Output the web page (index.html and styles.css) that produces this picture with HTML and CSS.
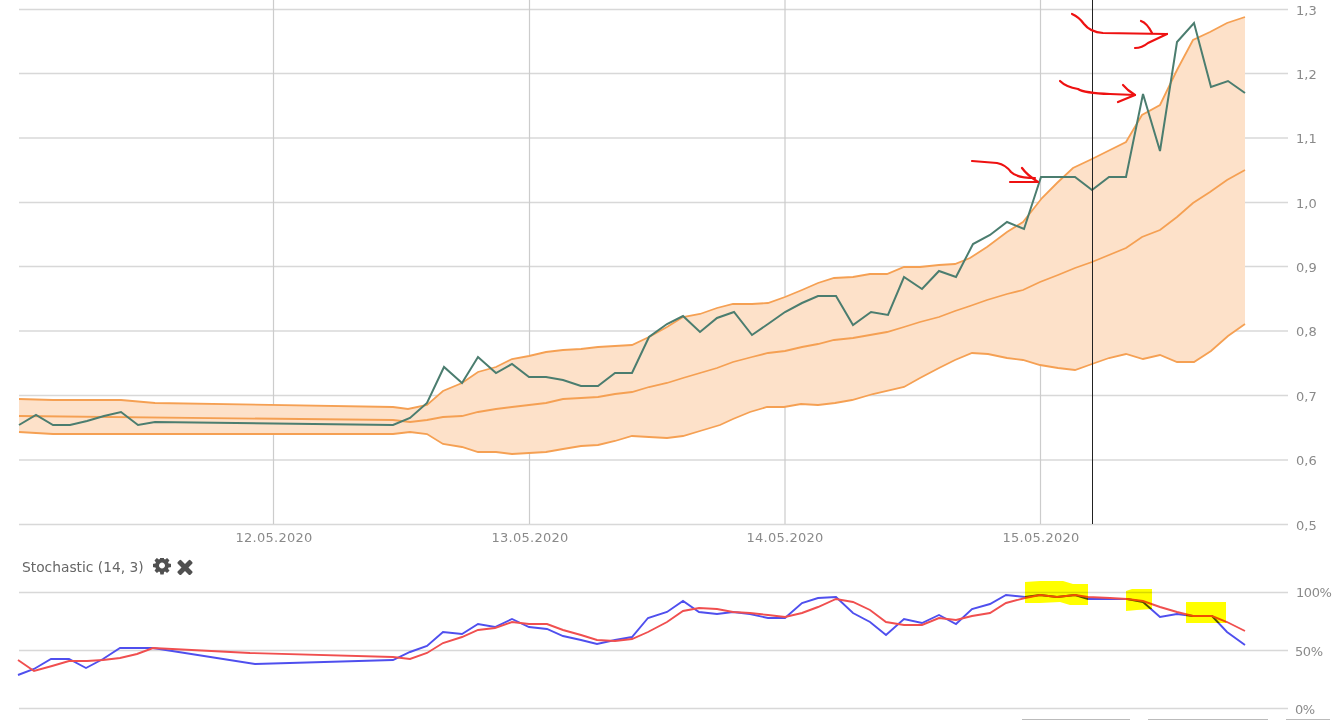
FILE: index.html
```html
<!DOCTYPE html>
<html lang="en">
<head>
    <meta charset="UTF-8">
    <meta name="viewport" content="width=device-width, initial-scale=1.0">
    <title>Chart</title>
    <link rel="stylesheet" href="styles.css">
</head>
<body>
    <div class="page">
        <svg class="main-chart" viewBox="0 0 1340 550">
            <g class="grid">
                <line x1="19" y1="9.5" x2="1288" y2="9.5"/>
                <line x1="19" y1="73.5" x2="1288" y2="73.5"/>
                <line x1="19" y1="138" x2="1288" y2="138"/>
                <line x1="19" y1="202.500" x2="1288" y2="202.500"/>
                <line x1="19" y1="266.500" x2="1288" y2="266.500"/>
                <line x1="19" y1="331" x2="1288" y2="331"/>
                <line x1="19" y1="395.500" x2="1288" y2="395.500"/>
                <line x1="19" y1="460" x2="1288" y2="460"/>
                <line x1="19" y1="524.500" x2="1288" y2="524.500"/>
            </g>
            <g class="grid-v">
                <line x1="273.500" y1="0" x2="273.500" y2="524"/>
                <line x1="529.500" y1="0" x2="529.500" y2="524"/>
                <line x1="785" y1="0" x2="785" y2="524"/>
                <line x1="1040.500" y1="0" x2="1040.500" y2="524"/>
            </g>

            <polygon class="band-fill" points="19,399 53,400 121,400 155,403 393,407 408,409 427,405 443,391 462,383 478,372 496,367 512,359 529,356 546,352 563,350 581,349 598,347 615,346 632,345 649,337 667,327 683,317 700,314 717,308 733,304 752,304 768,303 785,297 802,290 818,283 834,278 853,277 870,274 887,274 904,267 920,267 939,265 955,264 970,258 987,247 1007,232 1023,222 1042,198 1057,183 1073,168 1092,159 1110,150 1126,142 1142,115 1160,105 1177,70 1193,40 1210,32 1227,23 1245,17 1245,324 1228,336 1211,351 1194,362 1177,362 1160,355 1143,359 1126,354 1109,358 1092,364 1075,370 1058,368 1040,365 1023,360 1007,358 988,354 972,353 955,360 939,368 920,378 904,387 873,394 852,400 835,403 818,405 801,404 784,407 767,407 750,412 733,419 720,425 700,431 683,436 667,438 649,437 632,436 615,441 598,445 581,446 563,449 546,452 529,453 512,454 496,452 478,452 462,447 443,444 427,434 410,432 393,434 53,434 19,432"/>

            <polyline class="band-line" points="19,399 53,400 121,400 155,403 393,407 408,409 427,405 443,391 462,383 478,372 496,367 512,359 529,356 546,352 563,350 581,349 598,347 615,346 632,345 649,337 667,327 683,317 700,314 717,308 733,304 752,304 768,303 785,297 802,290 818,283 834,278 853,277 870,274 887,274 904,267 920,267 939,265 955,264 970,258 987,247 1007,232 1023,222 1042,198 1057,183 1073,168 1092,159 1110,150 1126,142 1142,115 1160,105 1177,70 1193,40 1210,32 1227,23 1245,17"/>
            <polyline class="band-line" points="19,416 393,420 410,422 427,420 443,417 462,416 478,412 496,409 512,407 529,405 546,403 563,399 581,398 598,397 615,394 632,392 649,387 667,383 683,378 700,373 717,368 733,362 752,357 768,353 785,351 802,347 818,344 834,340 853,338 870,335 887,332 904,327 920,322 939,317 955,311 970,306 987,300 1007,294 1023,290 1040,282 1058,275 1075,268 1092,262 1109,255 1126,248 1142,237 1160,230 1177,217 1193,203 1210,192 1227,180 1245,170"/>
            <polyline class="band-line" points="19,432 53,434 393,434 410,432 427,434 443,444 462,447 478,452 496,452 512,454 529,453 546,452 563,449 581,446 598,445 615,441 632,436 649,437 667,438 683,436 700,431 720,425 733,419 750,412 767,407 784,407 801,404 818,405 835,403 852,400 873,394 904,387 920,378 939,368 955,360 972,353 988,354 1007,358 1023,360 1040,365 1058,368 1075,370 1092,364 1109,358 1126,354 1143,359 1160,355 1177,362 1194,362 1211,351 1228,336 1245,324"/>

            <polyline class="price-line" points="19,425 36,415 53,425 70,425 87,421 104,416 121,412 138,425 155,422 393,425 410,418 427,403 444,367 462,383 478,357 496,373 512,364 529,377 546,377 563,380 581,386 598,386 615,373 632,373 649,337 667,324 683,316 700,332 717,318 734,312 752,335 768,324 785,312 802,303 818,296 836,296 853,325 871,312 888,315 904,277 922,289 939,271 956,277 973,244 990,235 1007,222 1024,229 1041,177 1058,177 1075,177 1092,190 1109,177 1126,177 1143,94 1160,151 1177,42 1194,23 1211,87 1228,81 1245,93"/>

            <line class="cursor" x1="1092.500" y1="0" x2="1092.500" y2="524"/>

            <g class="marker">
                <path d="M1072 14 Q1079 17 1084 24 Q1090 32 1103 33 L1167 34"/>
                <path d="M1141 21 Q1147 23 1152 33"/>
                <path d="M1135 48 Q1142 48 1148 43 L1167 34"/>
                <path d="M1060 81 Q1066 87 1078 89 Q1084 93 1110 94 L1135 95"/>
                <path d="M1123 85 L1128 90 L1135 95 L1118 102"/>
                <path d="M972 161 L997 163 Q1006 165 1011 172 Q1017 178 1035 178"/>
                <path d="M1022 168 Q1027 175 1038 182 L1010 182"/>
            </g>

            <g class="axis-label">
                <text x="1296" y="15">1,3</text>
                <text x="1296" y="79">1,2</text>
                <text x="1296" y="143">1,1</text>
                <text x="1296" y="208">1,0</text>
                <text x="1296" y="272">0,9</text>
                <text x="1296" y="336">0,8</text>
                <text x="1296" y="401">0,7</text>
                <text x="1296" y="465">0,6</text>
                <text x="1296" y="530">0,5</text>
            </g>
            <g class="axis-label date-label">
                <text x="274" y="542">12.05.2020</text>
                <text x="530" y="542">13.05.2020</text>
                <text x="785" y="542">14.05.2020</text>
                <text x="1041" y="542">15.05.2020</text>
            </g>
        </svg>

        <div class="study-head">
            <span class="study-title">Stochastic (14, 3)</span>
            <svg class="icon-gear" viewBox="0 0 1536 1536"><path d="M1024 640q0-106-75-181t-181-75-181 75-75 181 75 181 181 75 181-75 75-181zm512-109v222q0 12-8 23t-20 13l-185 28q-19 54-39 91 35 50 107 138 10 12 10 25t-9 23q-27 37-99 108t-94 71q-12 0-26-9l-138-108q-44 23-91 38-16 136-29 186-7 28-36 28h-222q-14 0-24.500-8.500t-11.500-21.500l-28-184q-49-16-90-37l-141 107q-10 9-25 9-14 0-25-11-126-114-165-168-7-10-7-23 0-12 8-23 15-21 51-66.500t54-70.500q-27-50-41-99l-183-27q-13-2-21-12.500t-8-23.500v-222q0-12 8-23t19-13l186-28q14-46 39-92-40-57-107-138-10-12-10-24 0-10 9-23 26-36 98.500-107.500t94.500-71.500q13 0 26 10l138 107q44-23 91-38 16-136 29-186 7-28 36-28h222q14 0 24.500 8.500t11.500 21.500l28 184q49 16 90 37l142-107q9-9 24-9 13 0 25 10 129 119 165 170 7 8 7 22 0 12-8 23-15 21-51 66.500t-54 70.500q26 50 41 98l183 28q13 2 21 12.500t8 23.500z"/></svg>
            <svg class="icon-close" viewBox="110 190 1190 1256"><path d="M1298 1214q0 40-28 68l-136 136q-28 28-68 28t-68-28l-294-294-294 294q-28 28-68 28t-68-28l-136-136q-28-28-28-68t28-68l294-294-294-294q-28-28-28-68t28-68l136-136q28-28 68-28t68 28l294 294 294-294q28-28 68-28t68 28l136 136q28 28 28 68t-28 68l-294 294 294 294q28 28 28 68z"/></svg>
        </div>

        <svg class="study-chart" viewBox="0 581 1340 139">
            <g class="grid">
                <line x1="19" y1="592.500" x2="1288" y2="592.500"/>
                <line x1="19" y1="650.500" x2="1288" y2="650.500"/>
                <line x1="19" y1="708.500" x2="1288" y2="708.500"/>
            </g>
            <polyline class="stoch-k" points="18,675 34,669 51,659 69,659 86,668 103,659 120,648 153,648 255,664 393,660 410,652 427,646 443,632 462,634 478,624 495,627 512,619 529,627 547,629 563,636 581,640 597,644 615,640 632,637 648,618 667,612 683,601 699,612 717,614 733,612 750,614 768,618 785,618 802,603 818,598 836,597 853,613 870,622 886,635 904,619 922,623 939,615 956,624 972,609 990,604 1006,595 1025,597 1040,595 1057,597 1075,595 1088,599 1110,599 1127,599 1143,602 1160,617 1177,614 1193,616 1212,616 1227,632 1245,645"/>
            <polyline class="stoch-d" points="18,660 34,671 52,666 69,661 87,661 103,660 120,658 137,654 153,648 250,653 393,657 410,659 427,653 443,643 462,637 478,630 495,628 512,622 529,624 547,624 563,630 581,635 597,640 615,641 632,639 648,632 667,622 683,611 699,608 717,609 733,612 750,613 768,615 785,617 802,613 818,607 836,599 853,602 870,610 886,622 904,625 922,625 939,618 956,620 972,616 990,613 1006,603 1025,598 1040,595 1057,597 1075,595 1088,597 1110,598 1127,599 1143,601 1160,607 1177,612 1193,616 1212,616 1227,622 1245,631"/>

            <g class="highlight">
                <polygon points="1025,582 1040,581 1063,581 1073,584 1088,584 1088,605 1070,605 1060,602 1040,603 1025,603"/>
                <polygon points="1126,591 1132,589 1152,589 1152,609 1137,610 1126,611"/>
                <polygon points="1186,602 1226,602 1226,623 1186,623"/>
            </g>

            <g class="axis-label pct-label">
                <text x="1296" y="597">100%</text>
                <text x="1295" y="656">50%</text>
                <text x="1295" y="714">0%</text>
            </g>
            <g class="bottom-edge">
                <line x1="1022" y1="719.500" x2="1130" y2="719.500"/>
                <line x1="1148" y1="719.500" x2="1268" y2="719.500"/>
                <line x1="1286" y1="719.500" x2="1330" y2="719.500"/>
            </g>
        </svg>
    </div>
</body>
</html>
```

FILE: styles.css
```css
body {
    margin: 0;
    background: #fff;
    font-family: "DejaVu Sans", sans-serif;
}

.page {
    width: 1340px;
    height: 720px;
    overflow: hidden;
}

.main-chart {
    display: block;
    width: 1340px;
    height: 550px;
}

.study-chart {
    display: block;
    width: 1340px;
    height: 139px;
}

.study-head {
    display: flex;
    align-items: center;
    height: 31px;
    padding: 3px 0 0 22px;
    box-sizing: border-box;
}

.study-title {
    font-size: 13.8px;
    color: #666;
    width: 131px;
}

.icon-gear {
    width: 18px;
    height: 18px;
    fill: #505050;
}

.icon-close {
    width: 16px;
    height: 16px;
    margin-left: 6px;
    fill: #505050;
}

.grid line {
    stroke: #d8d8d8;
    stroke-width: 1.4;
}

.grid-v line {
    stroke: #cccccc;
    stroke-width: 1.2;
}

.cursor {
    stroke: #222;
    stroke-width: 1;
}

.band-fill {
    fill: #fde1c9;
}

.band-line {
    fill: none;
    stroke: #f5a053;
    stroke-width: 1.8;
}

.price-line {
    fill: none;
    stroke: #4b7d6f;
    stroke-width: 2;
}

.marker path {
    fill: none;
    stroke: #ee1111;
    stroke-width: 2.2;
    stroke-linecap: round;
    stroke-linejoin: round;
}

.stoch-k {
    fill: none;
    stroke: #4f4fee;
    stroke-width: 1.9;
}

.stoch-d {
    fill: none;
    stroke: #f04f4f;
    stroke-width: 1.9;
}

.highlight polygon {
    fill: #ffff00;
    mix-blend-mode: multiply;
}

.axis-label text {
    font-size: 13px;
    fill: #8a8a8a;
}

.date-label text {
    text-anchor: middle;
    letter-spacing: 0.25px;
}

.pct-label text {
    letter-spacing: -0.4px;
}

.bottom-edge line {
    stroke: #bbb;
    stroke-width: 1;
}
```
